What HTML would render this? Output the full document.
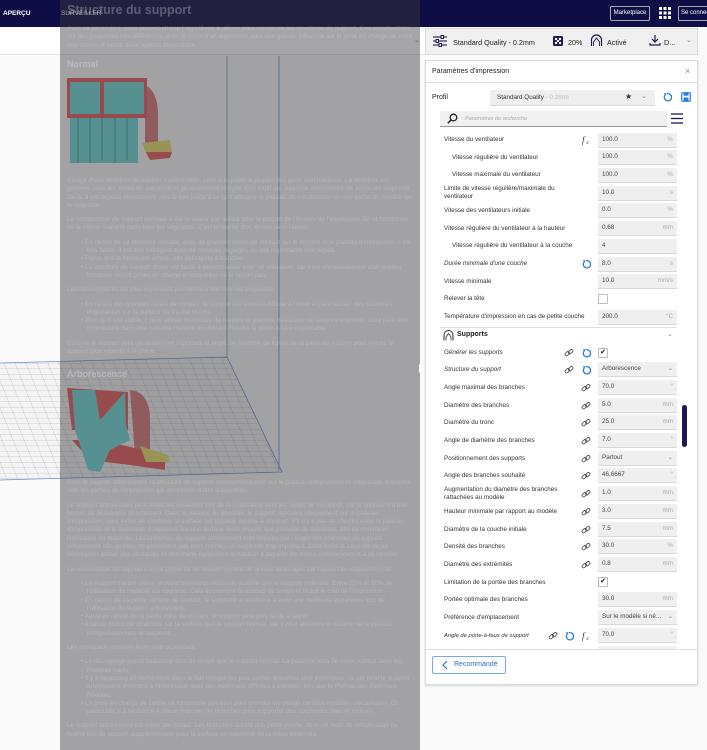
<!DOCTYPE html>
<html><head><meta charset="utf-8"><style>
*{margin:0;padding:0;box-sizing:border-box}
body{width:707px;height:750px;overflow:hidden;position:relative;background:#fafafa;font-family:"Liberation Sans","DejaVu Sans",sans-serif}
.a{position:absolute}
.top{left:0;top:0;width:707px;height:27px;background:#0f0d45}
.tb{color:#fff;font-size:6.5px}
.lbl{position:absolute;font-size:6.3px;color:#333;line-height:8px;white-space:nowrap}
.it{font-style:italic}
.fld{position:absolute;left:598px;width:79px;height:15px;background:#efefef;border-bottom:1px solid #d8d8d8;font-size:6.3px;color:#444;line-height:14px;padding-left:4px}
.fld .u{position:absolute;right:4px;top:0;color:#aaa}
.cb{position:absolute;left:598px;width:10px;height:10px;border:1px solid #bbb;background:#fff;border-radius:1px;font-size:7px;line-height:8px;text-align:center;color:#111}
.ic{position:absolute;width:10px;height:10px}
.ov{left:60px;top:0;width:360px;height:750px;background:rgba(55,55,60,0.45)}
.ot{position:absolute;left:67px;width:346px;font-size:6.4px;line-height:8.3px;color:rgba(255,255,255,0.2)}
.ot ul{padding-left:20px;list-style:none}
.ot li:before{content:"• ";margin-left:-6px}
.oh{position:absolute;left:67px;font-weight:bold;color:rgba(255,255,255,0.27)}
</style></head><body>
<svg width="0" height="0" style="position:absolute">
<defs>
<symbol id="lk" viewBox="0 0 10 10"><g fill="none" stroke="#555" stroke-width="0.9"><rect x="0.8" y="4.2" width="5" height="3" rx="1.5" transform="rotate(-45 3.3 5.7)"/><rect x="4.2" y="2.2" width="5" height="3" rx="1.5" transform="rotate(-45 6.7 3.7)"/></g></symbol>
<symbol id="rs" viewBox="0 0 10 10"><path d="M3 3.2 A3.6 3.6 0 1 0 5 1.8" fill="none" stroke="#2a7ce0" stroke-width="1.3"/><path d="M1.8 1.2 L4.6 1.2 L3.4 4 Z" fill="#2a7ce0"/></symbol>
<symbol id="fx" viewBox="0 0 10 10"><text x="0" y="8" font-family="Liberation Serif,serif" font-style="italic" font-size="9" fill="#333">f</text><text x="4.5" y="9" font-family="Liberation Serif,serif" font-style="italic" font-size="5" fill="#333">x</text></symbol>
<pattern id="gp" width="11" height="5.5" patternUnits="userSpaceOnUse" patternTransform="skewX(22)"><path d="M0 0H11M0 0V5.5" stroke="#a8a8a8" stroke-width="0.55" fill="none"/></pattern>
</defs></svg>

<div class="a" style="left:0;top:27px;width:425px;height:28px;background:#fff;border-bottom:1px solid #e2e2e2"></div>
<svg class="a" style="left:0;top:0" width="425" height="750">
<polygon points="0,363 227,357 282,472 0,480" fill="#f4f4f4"/>
<polygon points="0,363 227,357 282,472 0,480" fill="url(#gp)"/>
<polyline points="0,363 227,357 282,472 0,480" fill="none" stroke="#6a8fd0" stroke-width="0.8"/>
<line x1="227" y1="56" x2="227" y2="357" stroke="#6a8fd0" stroke-width="0.8"/>
<line x1="279" y1="56" x2="279" y2="470" stroke="#6a8fd0" stroke-width="0.8"/>
<path d="M135 82 Q158 84 158 115 L158 150 L145 148 L145 88 Z" fill="#d87878"/>
<rect x="67" y="78" width="80" height="40" fill="#e85a5a"/>
<rect x="70" y="82" width="30" height="32" fill="#6fd9d6"/>
<rect x="104" y="82" width="40" height="32" fill="#6fd9d6"/>
<rect x="70" y="118" width="68" height="45" fill="#6fd9d6"/>
<path d="M78 118V163M90 118V163M102 118V160M115 118V163M127 118V160" stroke="#4cb5b2" stroke-width="1.5"/>
<polygon points="142,143 170,140 172,152 148,158" fill="#e8e070"/>
<polygon points="146,152 172,152 170,158 150,160" fill="#e85a5a"/>
<path d="M130 390 Q150 392 150 420 L150 455 L135 455 Z" fill="#d87878"/>
<polygon points="67,388 128,392 128,430 72,430" fill="#e85a5a"/>
<polygon points="72,440 100,440 165,455 165,470 130,465 90,460" fill="#e85a5a"/>
<polygon points="140,446 168,455 170,462 146,462" fill="#e8e070"/>
<path d="M72 390 L95 390 L100 420 L125 392 L126 425 L130 440 L110 450 L100 472 L88 470 L80 445 L75 430 Z" fill="#6fd9d6"/>
</svg>

<div class="a top"></div>
<div class="a tb" style="left:3px;top:10px;font-weight:bold">APERÇU</div>
<div class="a tb" style="left:61px;top:10px">SURVEILLER</div>
<div class="a tb" style="left:610px;top:6px;width:40px;height:15px;border:1px solid #aaa;border-radius:2px;font-size:6px;line-height:13px;text-align:center">Marketplace</div>
<svg class="a" style="left:659px;top:7px" width="12" height="12"><g fill="#fff"><rect x="0" y="0" width="3" height="3"/><rect x="4.5" y="0" width="3" height="3"/><rect x="9" y="0" width="3" height="3"/><rect x="0" y="4.5" width="3" height="3"/><rect x="4.5" y="4.5" width="3" height="3"/><rect x="9" y="4.5" width="3" height="3"/><rect x="0" y="9" width="3" height="3"/><rect x="4.5" y="9" width="3" height="3"/><rect x="9" y="9" width="3" height="3"/></g></svg>
<div class="a tb" style="left:678px;top:6px;width:35px;height:15px;border:1px solid #aaa;border-radius:2px;font-size:6px;line-height:13px;padding-left:2px;white-space:nowrap;overflow:hidden">Se connecter</div>

<div class="a ov"></div>
<div class="oh" style="top:3px;font-size:12.5px">Structure du support</div>
<div class="ot" style="top:25px">Avec ce paramètre, vous pouvez choisir l'algorithme à utiliser pour construire les structures de support. Ces constructions ont des propriétés très différentes, donc le choix d'un algorithme aura une grande influence sur la prise en charge de votre impression. Il existe deux options disponibles.</div>
<div class="oh" style="top:59px;font-size:9px">Normal</div>
<div class="ot" style="top:177px">Il s'agit d'une structure de soutien traditionnelle, celle à laquelle la plupart des gens sont habitués. La structure est générée sous les zones en surplomb et généralement remplie d'un motif qui supporte directement les zones en surplomb. De là, il est déposé directement vers le bas jusqu'à ce qu'il atteigne le plateau de construction ou une partie du modèle qui le supporte.<br><div style="height:6px"></div>La construction de support normale a été la valeur par défaut pour la plupart de l'histoire de l'impression 3D et fonctionne de la même manière dans tous les segments. C'est la norme d'or, et non sans raison:<div style="height:6px"></div><ul><li>En raison de sa structure robuste, avec de grandes zones de contact sur le modèle et le plateau d'impression, il est très fiable. Il est très indulgent avec de mauvais réglages ou une imprimante mal réglée.</li><li>Parce que la forme est simple, elle est rapide à trancher.</li><li>La structure de support droite est facile à personnaliser pour un utilisateur, car il est immédiatement clair quelles bordures seront prises en charge et lesquelles ne le seront pas.</li></ul><div style="height:6px"></div>Les inconvénients les plus importants proviennent des mêmes propriétés:<div style="height:6px"></div><ul><li>En raison des grandes zones de contact, le support est souvent difficile à retirer et peut laisser des cicatrices importantes sur la surface où il a été touché.</li><li>Bien qu'il soit stable, il peut utiliser beaucoup de matière et prendre beaucoup de temps à imprimer. Cela peut être contrecarré dans une certaine mesure en utilisant Rendre le porte-à-faux imprimable.</li></ul><div style="height:6px"></div>Comme le support sera généralement important et large, un Nombre de lignes de la paroi du support pour rendre le support plus robuste à la place.</div>
<div class="oh" style="top:369px;font-size:9px">Arborescence</div>
<div class="ot" style="top:479px">Avec le support arborescent, la structure de support commencera petit sur le plateau d'impression et créera des branches vers les parties de l'impression qui ont besoin d'être supportées.<div style="height:6px"></div>Le support arborescent peut éviter les obstacles lors de la croissance vers les zones de surplomb, car le support n'a pas besoin de descendre directement. Dans la mesure du possible, le support reposera uniquement sur le plateau d'impression, pour éviter de cicatriser la surface sur laquelle repose le support. S'il n'y a pas de chemin entre le plateau d'impression et le surplomb, il reposera sur une surface aussi proche que possible du surplomb, afin de minimiser l'utilisation du matériau. Les branches du support arborescent sont limitées par l'Angle des branches de support arborescent afin qu'elles ne produisent pas elles-mêmes un surplomb trop important. Cela limite la capacité de se développer autour des obstacles et détermine également la hauteur à laquelle les troncs commenceront à se ramifier.<div style="height:6px"></div>La construction du support d'arbre présente un certain nombre de grands avantages par rapport au support normal:<div style="height:6px"></div><ul><li>Le support d'arbre utilise souvent beaucoup moins de matière que le support ordinaire. Entre 25% et 50% de l'utilisation du matériel est courante. Cela économise beaucoup de temps et réduit le coût de l'impression.</li><li>En raison de sa petite surface de contact, le surplomb a tendance à avoir une meilleure apparence lors de l'utilisation du support arborescent.</li><li>Aussi en raison de la petite zone de contact, le support sera plus facile à retirer.</li><li>Il laisse moins de cicatrices sur la surface que le support normal, car il peut atteindre le modèle de le plateau d'impression vers le surplomb.</li></ul><div style="height:6px"></div>Les principaux inconvénients sont cependant:<div style="height:6px"></div><ul><li>Le découpage prend beaucoup plus de temps que le support normal. La patience sera de mise, surtout avec les modèles hauts.</li><li>Il y a beaucoup d'interruptions dans le flux lorsque les plus petites branches sont imprimées, ce qui rend le support arborescent impropre à l'impression avec des matériaux difficiles à extruder, tels que le PVA ou des matériaux flexibles.</li><li>La prise en charge de l'arbre ne fonctionne pas bien pour prendre en charge certains modèles mécaniques. En particulier, il a tendance à placer trop peu de branches pour supporter des surplombs plats et inclinés.</li></ul><div style="height:6px"></div>Le support arborescent est creux par défaut. Les branches auront une petite pointe, donc un motif de remplissage ne fournit pas de support supplémentaire pour la surface en surplomb de la pièce imprimée.</div>
<div class="a" style="left:414px;top:36px;font-size:7px;color:#666">⌄</div>
<svg class="a" style="left:419px;top:364px" width="6" height="9"><polygon points="0,0 5,4.5 0,9" fill="#fff"/></svg>

<div class="a" style="left:425px;top:28px;width:273px;height:27px;background:#f0f0f0;border:1px solid #ddd"></div>
<svg class="a" style="left:433px;top:35px" width="14" height="12"><g stroke="#1a1a50" stroke-width="1.1"><line x1="0" y1="2" x2="14" y2="2"/><line x1="0" y1="6" x2="14" y2="6"/><line x1="0" y1="10" x2="14" y2="10"/></g><g fill="#f0f0f0" stroke="#1a1a50"><rect x="8" y="0.5" width="2.5" height="3"/><rect x="3" y="4.5" width="2.5" height="3"/><rect x="6" y="8.5" width="2.5" height="3"/></g></svg>
<div class="a" style="left:453px;top:38px;font-size:7.2px;color:#222">Standard Quality - 0.2mm</div>
<svg class="a" style="left:553px;top:36px" width="10" height="10"><rect width="10" height="10" rx="1.5" fill="#1a1a50"/><g fill="#fff"><circle cx="3" cy="3" r="1.2"/><circle cx="7" cy="3" r="1.2"/><circle cx="5" cy="5" r="1.2"/><circle cx="3" cy="7" r="1.2"/><circle cx="7" cy="7" r="1.2"/></g></svg>
<div class="a" style="left:568px;top:38px;font-size:7.2px;color:#222">20%</div>
<svg class="a" style="left:590px;top:34px" width="13" height="13"><path d="M1.5 12 V6 A5 5 0 0 1 11.5 6 V12" fill="none" stroke="#1a1a50" stroke-width="1.2"/><path d="M3.5 12 V8 L6.5 4 L9.5 8 V12" fill="none" stroke="#1a1a50" stroke-width="0.9"/></svg>
<div class="a" style="left:607px;top:38px;font-size:7.2px;color:#222">Activé</div>
<svg class="a" style="left:649px;top:35px" width="12" height="12"><path d="M6 0V7M3 4L6 7L9 4M1 8V10H11V8" fill="none" stroke="#1a1a50" stroke-width="1.2"/></svg>
<div class="a" style="left:664px;top:38px;font-size:7.2px;color:#222">D...</div>
<div class="a" style="left:686px;top:36px;font-size:7px;color:#888">⌄</div>

<div class="a" style="left:425px;top:60px;width:273px;height:625px;background:#fff;border:1px solid #ddd;box-shadow:0 1px 2px rgba(0,0,0,0.15)"></div>
<div class="a" style="left:432px;top:68px;font-size:7px;color:#222">Paramètres d'impression</div>
<div class="a" style="left:685px;top:66px;font-size:9px;color:#888">×</div>
<div class="a" style="left:426px;top:82px;width:271px;height:1px;background:#e0e0e0"></div>
<div class="a" style="left:432px;top:94px;font-size:7px;color:#222">Profil</div>
<div class="a" style="left:490px;top:90px;width:165px;height:16px;background:#efefef;border-bottom:1px solid #d8d8d8;font-size:6.3px;line-height:15px;padding-left:7px;color:#333">Standard Quality <span style="color:#bbb">- 0.2mm</span></div>
<div class="a" style="left:625px;top:92px;font-size:8px;color:#333">★</div>
<div class="a" style="left:641px;top:92px;font-size:7px;color:#888">⌄</div>
<svg class="a" style="left:662px;top:92px" width="10" height="10"><use href="#rs"/></svg>
<svg class="a" style="left:681px;top:92px" width="10" height="10"><rect x="0.7" y="0.7" width="8.6" height="8.6" rx="1" fill="none" stroke="#2a7ce0" stroke-width="1.2"/><rect x="2.5" y="0.7" width="5" height="3" fill="#2a7ce0"/><rect x="2.5" y="5.5" width="5" height="3.5" fill="#2a7ce0"/></svg>
<div class="a" style="left:440px;top:111px;width:227px;height:16px;background:#f0f0f0;border-bottom:1px solid #999"></div>
<svg class="a" style="left:447px;top:113px" width="11" height="11"><circle cx="6.5" cy="4.5" r="3.3" fill="none" stroke="#222" stroke-width="1.3"/><line x1="4.2" y1="6.8" x2="0.8" y2="10.2" stroke="#222" stroke-width="1.5"/></svg>
<div class="a it" style="left:465px;top:116px;font-size:5.5px;color:#aaa">Paramètres de recherche</div>
<svg class="a" style="left:671px;top:113px" width="12" height="11"><g stroke="#1a1a50" stroke-width="1.3"><line x1="0" y1="1" x2="12" y2="1"/><line x1="0" y1="5.5" x2="12" y2="5.5"/><line x1="0" y1="10" x2="12" y2="10"/></g></svg>

<div class="lbl" style="left:444px;top:136px">Vitesse du ventilateur</div><svg class="ic" style="left:582px;top:135px"><use href="#fx"/></svg><div class="fld" style="top:133px">100.0<span class="u">%</span></div>
<div class="lbl" style="left:452px;top:154px">Vitesse régulière du ventilateur</div><div class="fld" style="top:150px">100.0<span class="u">%</span></div>
<div class="lbl" style="left:452px;top:171px">Vitesse maximale du ventilateur</div><div class="fld" style="top:168px">100.0<span class="u">%</span></div>
<div class="lbl" style="left:444px;top:185px">Limite de vitesse régulière/maximale du<br>ventilateur</div><div class="fld" style="top:186px">10.0<span class="u">s</span></div>
<div class="lbl" style="left:444px;top:207px">Vitesse des ventilateurs initiale</div><div class="fld" style="top:203px">0.0<span class="u">%</span></div>
<div class="lbl" style="left:444px;top:225px">Vitesse régulière du ventilateur à la hauteur</div><div class="fld" style="top:221px">0.68<span class="u">mm</span></div>
<div class="lbl" style="left:452px;top:242px">Vitesse régulière du ventilateur à la couche</div><div class="fld" style="top:239px">4</div>
<div class="lbl it" style="left:444px;top:260px">Durée minimale d'une couche</div><svg class="ic" style="left:581px;top:259px"><use href="#rs"/></svg><div class="fld" style="top:257px">8.0<span class="u">s</span></div>
<div class="lbl" style="left:444px;top:278px">Vitesse minimale</div><div class="fld" style="top:274px">10.0<span class="u">mm/s</span></div>
<div class="lbl" style="left:444px;top:295px">Relever la tête</div><div class="cb" style="top:294px"></div>
<div class="lbl" style="left:444px;top:313px">Température d'impression en cas de petite couche</div><div class="fld" style="top:310px">200.0<span class="u">°C</span></div>
<div class="a" style="left:440px;top:327px;width:237px;height:1px;background:#e0e0e0"></div>
<svg class="a" style="left:443px;top:330px" width="11" height="11"><path d="M1 10.5V5A4.5 4.5 0 0 1 10 5V10.5" fill="none" stroke="#333" stroke-width="1"/><path d="M3 10.5V7L5.5 3.5L8 7V10.5" fill="none" stroke="#333" stroke-width="0.8"/></svg>
<div class="a" style="left:457px;top:331px;font-size:7px;font-weight:bold;color:#222">Supports</div>
<div class="a" style="left:667px;top:330px;font-size:7px;color:#888">⌄</div>

<div class="lbl it" style="left:444px;top:349px">Générer les supports</div><svg class="ic" style="left:564px;top:348px"><use href="#lk"/></svg><svg class="ic" style="left:581px;top:348px"><use href="#rs"/></svg><div class="cb" style="top:348px">✔</div>
<div class="lbl it" style="left:444px;top:366px">Structure du support</div><svg class="ic" style="left:564px;top:365px"><use href="#lk"/></svg><svg class="ic" style="left:581px;top:365px"><use href="#rs"/></svg><div class="fld" style="top:362px">Arborescence<span class="u" style="color:#888">⌄</span></div>
<div class="lbl" style="left:444px;top:384px">Angle maximal des branches</div><svg class="ic" style="left:581px;top:383px"><use href="#lk"/></svg><div class="fld" style="top:380px">70.0<span class="u">°</span></div>
<div class="lbl" style="left:444px;top:402px">Diamètre des branches</div><svg class="ic" style="left:581px;top:401px"><use href="#lk"/></svg><div class="fld" style="top:398px">5.0<span class="u">mm</span></div>
<div class="lbl" style="left:444px;top:419px">Diamètre du tronc</div><svg class="ic" style="left:581px;top:418px"><use href="#lk"/></svg><div class="fld" style="top:415px">25.0<span class="u">mm</span></div>
<div class="lbl" style="left:444px;top:437px">Angle de diamètre des branches</div><svg class="ic" style="left:581px;top:436px"><use href="#lk"/></svg><div class="fld" style="top:433px">7.0<span class="u">°</span></div>
<div class="lbl" style="left:444px;top:455px">Positionnement des supports</div><svg class="ic" style="left:581px;top:454px"><use href="#lk"/></svg><div class="fld" style="top:451px">Partout<span class="u" style="color:#888">⌄</span></div>
<div class="lbl" style="left:444px;top:472px">Angle des branches souhaité</div><svg class="ic" style="left:581px;top:471px"><use href="#lk"/></svg><div class="fld" style="top:468px">46.6667<span class="u">°</span></div>
<div class="lbl" style="left:444px;top:486px">Augmentation du diamètre des branches<br>rattachées au modèle</div><svg class="ic" style="left:581px;top:489px"><use href="#lk"/></svg><div class="fld" style="top:486px">1.0<span class="u">mm</span></div>
<div class="lbl" style="left:444px;top:508px">Hauteur minimale par rapport au modèle</div><svg class="ic" style="left:581px;top:507px"><use href="#lk"/></svg><div class="fld" style="top:504px">3.0<span class="u">mm</span></div>
<div class="lbl" style="left:444px;top:526px">Diamètre de la couche initiale</div><svg class="ic" style="left:581px;top:525px"><use href="#lk"/></svg><div class="fld" style="top:522px">7.5<span class="u">mm</span></div>
<div class="lbl" style="left:444px;top:543px">Densité des branches</div><svg class="ic" style="left:581px;top:542px"><use href="#lk"/></svg><div class="fld" style="top:539px">30.0<span class="u">%</span></div>
<div class="lbl" style="left:444px;top:561px">Diamètre des extrémités</div><svg class="ic" style="left:581px;top:560px"><use href="#lk"/></svg><div class="fld" style="top:557px">0.8<span class="u">mm</span></div>
<div class="lbl" style="left:444px;top:579px">Limitation de la portée des branches</div><div class="cb" style="top:577px">✔</div>
<div class="lbl" style="left:444px;top:596px">Portée optimale des branches</div><div class="fld" style="top:592px">30.0<span class="u">mm</span></div>
<div class="lbl" style="left:444px;top:614px">Préférence d'emplacement</div><div class="fld" style="top:610px">Sur le modèle si né...<span class="u" style="color:#888">⌄</span></div>
<div class="lbl it" style="left:444px;top:632px;font-size:5.8px">Angle de porte-à-faux de support</div><svg class="ic" style="left:548px;top:631px"><use href="#lk"/></svg><svg class="ic" style="left:564px;top:631px"><use href="#rs"/></svg><svg class="ic" style="left:582px;top:631px"><use href="#fx"/></svg><div class="fld" style="top:628px">70.0<span class="u">°</span></div>
<div class="a" style="left:598px;top:646px;width:79px;height:3px;background:#efefef"></div>
<div class="a" style="left:682px;top:405px;width:5px;height:42px;background:#1a1a50;border-radius:3px"></div>

<div class="a" style="left:426px;top:649px;width:271px;height:1px;background:#e0e0e0"></div>
<div class="a" style="left:432px;top:656px;width:74px;height:18px;border:1px solid #7aa8ea;border-radius:2px;font-size:7px;line-height:16px;color:#2a6fd0;padding-left:21px">Recommandé</div>
<svg class="a" style="left:442px;top:660px" width="6" height="10"><path d="M5 1L1 5L5 9" fill="none" stroke="#2a6fd0" stroke-width="1.2"/></svg>
</body></html>
